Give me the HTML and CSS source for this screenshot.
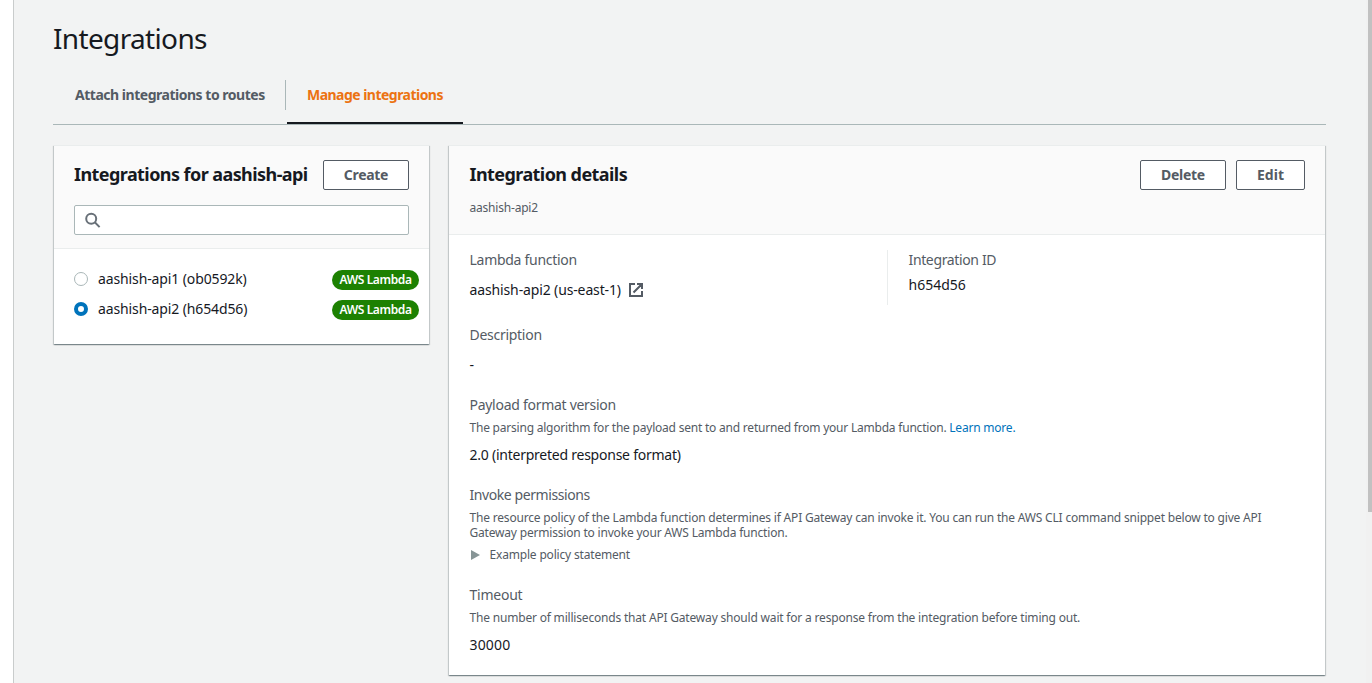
FILE: index.html
```html
<!DOCTYPE html>
<html lang="en">
<head>
<meta charset="utf-8">
<title>Integrations</title>
<link rel="stylesheet" href="styles.css">
</head>
<body>
<div class="app">
  <main class="page">
    <h1 class="title">Integrations</h1>
    <nav class="tabs">
      <a class="tab">Attach integrations to routes</a>
      <a class="tab active">Manage integrations</a>
    </nav>
    <div class="columns">
      <section class="card list">
        <header class="list-head">
          <div class="row"><h2>Integrations for aashish-api</h2><button class="btn create">Create</button></div>
          <div class="search"><svg width="16" height="16" viewBox="0 0 16 16" fill="none" stroke="#687078" stroke-width="2"><circle cx="6.2" cy="6.7" r="5"/><path d="M9.8 10.3l4.8 4.8"/></svg></div>
        </header>
        <div class="options">
          <div class="option"><span class="radio"></span><span class="name">aashish-api1 (ob0592k)</span><span class="badge">AWS Lambda</span></div>
          <div class="option"><span class="radio on"></span><span class="name">aashish-api2 (h654d56)</span><span class="badge">AWS Lambda</span></div>
        </div>
      </section>
      <section class="card details">
        <header class="detail-head">
          <div class="row"><h2>Integration details</h2><div class="actions"><button class="btn delete">Delete</button><button class="btn edit">Edit</button></div></div>
          <p class="sub">aashish-api2</p>
        </header>
        <div class="body">
          <div class="pair">
            <div class="field"><h3>Lambda function</h3><p class="value link">aashish-api2 (us-east-1)<svg width="16" height="16" viewBox="0 0 16 16" fill="none" stroke="#545b64" stroke-width="2"><path d="M7 2H2v12h12V9M9 2h5v5M14 2L5.5 10.5"/></svg></p></div>
            <div class="field id"><h3>Integration ID</h3><p class="value">h654d56</p></div>
          </div>
          <div class="field description"><h3>Description</h3><p class="value">-</p></div>
          <div class="field payload"><h3>Payload format version</h3><p class="hint">The parsing algorithm for the payload sent to and returned from your Lambda function. <a>Learn more.</a></p><p class="value">2.0 (interpreted response format)</p></div>
          <div class="field invoke"><h3>Invoke permissions</h3><p class="hint">The resource policy of the Lambda function determines if API Gateway can invoke it. You can run the AWS CLI command snippet below to give API<br>Gateway permission to invoke your AWS Lambda function.</p><p class="expand"><i></i>Example policy statement</p></div>
          <div class="field timeout"><h3>Timeout</h3><p class="hint">The number of milliseconds that API Gateway should wait for a response from the integration before timing out.</p><p class="value">30000</p></div>
        </div>
      </section>
    </div>
  </main>
  <div class="scroll"><div class="thumb"></div></div>
</div>
</body>
</html>
```
FILE: styles.css
```css
* { box-sizing: border-box; }
body { margin: 0; background: #fff; color: #16191f; font-family: "Noto Sans", sans-serif; font-size: 14px; line-height: 20px; }
h1, h2, h3, p { margin: 0; font-weight: 400; }
.app { display: flex; height: 683px; overflow: hidden; padding-left: 13px; }
.page { flex: 1; background: #f2f3f3; border-left: 1px solid #c9cccc; padding: 18px 40px 0 39px; }
.title { font-size: 28px; line-height: 40px; letter-spacing: -0.65px; }
.tabs { display: flex; height: 65px; margin-top: 2px; border-bottom: 1px solid #aab7b8; padding-top: 20px; letter-spacing: -0.48px; white-space: nowrap; }
.tab { height: 30px; padding: 5px 0 5px 22px; border-right: 1px solid #aab7b8; color: #545b64; font-weight: 700; }
.tab:first-child { width: 233px; }
.tab.active { width: 176px; height: 44px; margin-left: 1px; padding-left: 20px; border-right: 0; border-bottom: 2px solid #16191f; color: #ec7211; letter-spacing: -0.53px; }
.columns { display: flex; gap: 20px; margin: 20px 1px 0; align-items: flex-start; }
.card { background: #fff; border-top: 1px solid #eaeded; box-shadow: 0 1px 1px rgba(0,28,36,.3), 1px 1px 1px rgba(0,28,36,.15), -1px 1px 1px rgba(0,28,36,.15); }
.list { width: 375px; height: 199px; }
.details { flex: 1; height: 530px; }
.row { display: flex; justify-content: space-between; height: 30px; }
h2 { font-size: 18px; line-height: 28px; font-weight: 700; letter-spacing: -0.57px; white-space: nowrap; }
.btn { height: 30px; padding: 0; border: 1px solid #545b64; border-radius: 2px; background: #fff; color: #545b64; font: 700 14px/20px "Noto Sans", sans-serif; letter-spacing: -0.3px; }
.create, .delete { width: 86px; }
.edit { width: 69px; letter-spacing: 0; }
.actions { display: flex; gap: 10px; }
.list-head { height: 103px; padding: 14px 20px 0; background: #fafafa; border-bottom: 1px solid #eaeded; }
.search { display: flex; align-items: center; height: 30px; margin-top: 15px; padding-left: 9.5px; border: 1px solid #aab7b8; border-radius: 2px; background: #fff; }
.options { padding: 20px 10px 0 20px; }
.option { display: flex; align-items: center; height: 20px; margin-bottom: 10px; }
.radio { width: 14px; height: 14px; border: 1px solid #aab7b8; border-radius: 50%; margin-right: 10px; background: #fff; }
.radio.on { border: 4px solid #0073bb; }
.name { flex: 1; letter-spacing: -0.12px; }
.badge { height: 20px; width: 87px; margin: 2px 0 0; border-radius: 10px; background: #1d8102; color: #fff; font-size: 12px; font-weight: 600; letter-spacing: -0.38px; text-align: center; }
.detail-head { height: 89px; padding: 14px 20px 0 20.5px; background: #fafafa; border-bottom: 1px solid #eaeded; }
.sub { margin-top: 8px; font-size: 12px; color: #545b64; letter-spacing: -0.2px; }
.body { padding: 15px 20px 15px 20.5px; }
.pair { display: flex; height: 55px; }
.pair .field { width: 417.5px; }
.pair .id { border-left: 1px solid #eaeded; padding-left: 20.5px; }
.pair .id h3 { letter-spacing: -0.36px; }
h3 { font-size: 14px; line-height: 20px; color: #545b64; letter-spacing: -0.28px; }
.value { margin-top: 5px; }
.link { display: flex; align-items: center; gap: 7px; margin-top: 10px; letter-spacing: -0.13px; }
.description { margin-top: 20px; }
.description .value { margin-top: 10px; }
.payload, .invoke, .timeout { margin-top: 20px; }
.payload .value { letter-spacing: -0.24px; }
.payload .hint { letter-spacing: -0.215px; }
.invoke h3 { letter-spacing: -0.42px; }
.timeout h3 { letter-spacing: -0.24px; }
.timeout .value { letter-spacing: 0.15px; }
.hint { font-size: 12px; line-height: 15px; color: #545b64; margin-top: 5px; white-space: nowrap; letter-spacing: -0.19px; }
.hint a { color: #0073bb; }
.hint + .value { margin-top: 10px; }
.expand { display: flex; align-items: center; font-size: 12px; color: #545b64; margin-top: 5px; letter-spacing: -0.18px; }
.expand i { border: 5px solid transparent; border-left: 9px solid #879596; border-right: 0; margin: 0 9.5px 0 1.5px; }
.scroll { width: 6px; padding-left: 2px; background: #f1f1f1; }
.thumb { height: 512px; background: #c1c1c1; }
```
